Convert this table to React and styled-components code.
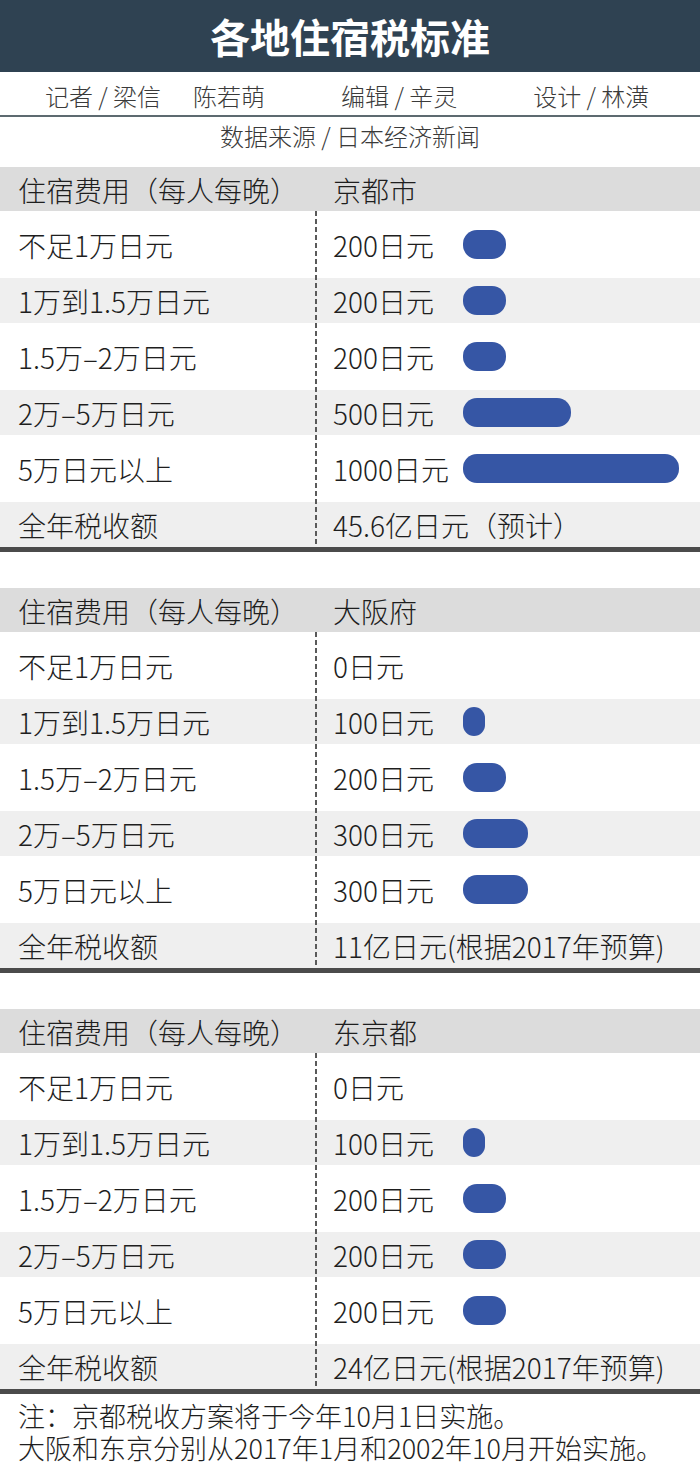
import React from "react";
import styled, { createGlobalStyle } from "styled-components";

const Global = createGlobalStyle`
  html, body { margin: 0; padding: 0; background: #fff; }
  body {
    font-family: "Noto Sans CJK SC", "Liberation Sans", sans-serif;
    font-weight: 300;
    color: #1e1e1e;
  }
`;

const Page = styled.div`
  width: 700px;
  display: flex;
  flex-direction: column;
`;

const TitleBar = styled.header`
  height: 72px;
  background: #2f4252;
  color: #fff;
  display: flex;
  align-items: center;
  justify-content: center;
  font-family: "Noto Sans CJK SC", sans-serif;
  font-weight: 700;
  font-size: 40px;
  line-height: 1;
`;

const Credits = styled.div`
  height: 45px;
  box-sizing: border-box;
  padding: 4px 0 0 45px;
  display: flex;
  align-items: center;
  font-size: 24px;
  color: #3a3a3a;
  border-bottom: 2px solid #5d6a70;
`;

const Credit = styled.span`
  margin-left: ${(p) => p.$ml || 0}px;
  white-space: nowrap;
`;

const Source = styled.div`
  height: 32px;
  line-height: 32px;
  padding-top: 3px;
  text-align: center;
  font-size: 24px;
  color: #3a3a3a;
  margin-bottom: 15px;
`;

const Table = styled.section`
  display: flex;
  flex-direction: column;
  border-bottom: 5px solid #4b4b4b;
  margin-bottom: ${(p) => (p.$last ? 0 : 36)}px;
`;

const HeaderRow = styled.div`
  height: 44px;
  background: #dcdcdc;
  display: grid;
  grid-template-columns: 317px 1fr;
  align-items: center;
  font-size: 28px;
`;

const Row = styled.div`
  height: 56px;
  display: grid;
  grid-template-columns: 317px 1fr;
  align-items: end;
  font-size: 28px;
  background-image: repeating-linear-gradient(
      to bottom,
      #5a5a5a 0 5px,
      transparent 5px 8px
    )${(p) => (p.$shade ? ", linear-gradient(#efefef, #efefef)" : "")};
  background-size: 2px 100%, 100% 45px;
  background-position: 315px 0, 0 11px;
  background-repeat: no-repeat;
`;

const LeftCell = styled.div`
  height: 45px;
  display: flex;
  align-items: center;
  padding-left: 18px;
  white-space: nowrap;
`;

const RightCell = styled.div`
  height: 45px;
  display: flex;
  align-items: center;
  padding-left: 16px;
  white-space: nowrap;
`;

const Value = styled.span`
  flex: 0 0 130px;
`;

const Bar = styled.span`
  display: block;
  height: 29px;
  width: ${(p) => p.$w}px;
  background: #3656a5;
  border-radius: 14px;
`;

const Notes = styled.div`
  padding: 6px 18px 0;
  font-size: 27px;
  line-height: 32px;
  white-space: nowrap;
`;

const rowLabels = [
  "不足1万日元",
  "1万到1.5万日元",
  "1.5万–2万日元",
  "2万–5万日元",
  "5万日元以上",
];

const tables = [
  { city: "京都市", values: [200, 200, 200, 500, 1000], total: "45.6亿日元（预计）" },
  { city: "大阪府", values: [0, 100, 200, 300, 300], total: "11亿日元(根据2017年预算)" },
  { city: "东京都", values: [0, 100, 200, 200, 200], total: "24亿日元(根据2017年预算)" },
];

function TaxTable({ data, last }) {
  return (
    <Table $last={last}>
      <HeaderRow>
        <LeftCell>住宿费用（每人每晚）</LeftCell>
        <RightCell>{data.city}</RightCell>
      </HeaderRow>
      {rowLabels.map((label, i) => (
        <Row key={label} $shade={i % 2 === 1}>
          <LeftCell>{label}</LeftCell>
          <RightCell>
            <Value>{data.values[i]}日元</Value>
            {data.values[i] > 0 && <Bar $w={Math.round(data.values[i] * 0.216)} />}
          </RightCell>
        </Row>
      ))}
      <Row $shade>
        <LeftCell>全年税收额</LeftCell>
        <RightCell>{data.total}</RightCell>
      </Row>
    </Table>
  );
}

export default function App() {
  return (
    <>
      <Global />
      <Page>
        <TitleBar>各地住宿税标准</TitleBar>
        <Credits>
          <Credit>记者 / 梁信</Credit>
          <Credit $ml={32}>陈若萌</Credit>
          <Credit $ml={76}>编辑 / 辛灵</Credit>
          <Credit $ml={76}>设计 / 林潢</Credit>
        </Credits>
        <Source>数据来源 / 日本经济新闻</Source>
        {tables.map((t, i) => (
          <TaxTable key={t.city} data={t} last={i === tables.length - 1} />
        ))}
        <Notes>
          注：京都税收方案将于今年10月1日实施。
          <br />
          大阪和东京分别从2017年1月和2002年10月开始实施。
        </Notes>
      </Page>
    </>
  );
}
